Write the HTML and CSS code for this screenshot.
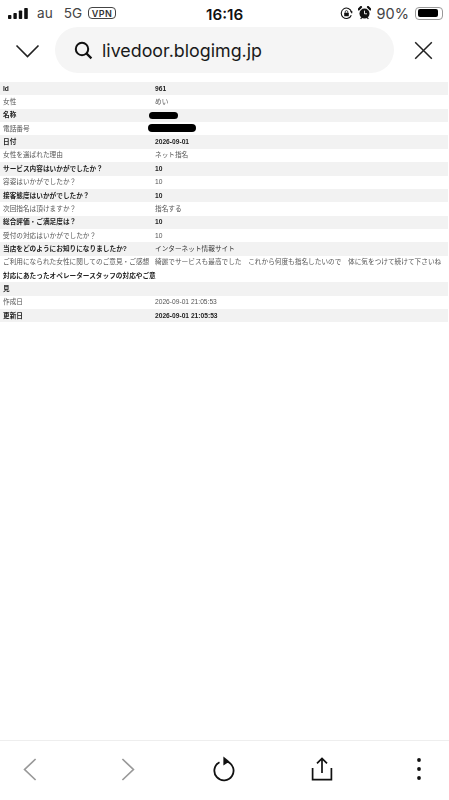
FILE: index.html
```
<!DOCTYPE html>
<html lang="ja">
<head>
<meta charset="utf-8">
<title>livedoor.blogimg.jp</title>
<link rel="stylesheet" href="styles.css">
</head>
<body>
<div class="phone">
  <div class="status">
    <div class="status-left">
      <svg class="signal" width="21" height="11" viewBox="0 0 21 11"><rect x="0" y="7" width="3.4" height="4" rx=".8"/><rect x="5.4" y="5" width="3.4" height="6" rx=".8"/><rect x="10.8" y="2.4" width="3.4" height="8.6" rx=".8"/><rect x="16.2" y="0" width="3.6" height="11" rx=".8"/></svg>
      <span class="carrier">au</span>
      <span class="net">5G</span>
      <span class="vpn">VPN</span>
    </div>
    <div class="clock">16:16</div>
    <div class="status-right">
      <svg class="lock" width="13" height="13" viewBox="0 0 13 13"><path d="M11.3 8.2A5.2 5.2 0 1 1 11.5 5" fill="none" stroke="#111" stroke-width="1.1"/><path d="M10 4.2l2.6.3-.6 2.2z" fill="#111"/><rect x="4.2" y="5.8" width="4.6" height="3.5" rx=".5" fill="#111"/><path d="M5.2 5.9V4.9a1.3 1.3 0 0 1 2.6 0v1" fill="none" stroke="#111" stroke-width=".8"/></svg>
      <svg class="alarm" width="13" height="14" viewBox="0 0 13 14"><circle cx="6.5" cy="7.6" r="5" fill="#111"/><path d="M.6 3.4 3 1M12.4 3.4 10 1" stroke="#111" stroke-width="2.2" stroke-linecap="round"/><path d="M6.5 4.6v3.2H9" fill="none" stroke="#fff" stroke-width=".9"/><path d="M2.6 12.8l1-1M10.4 12.8l-1-1" stroke="#111" stroke-width="1.2"/></svg>
      <span class="pct">90%</span>
      <span class="battery"><span class="battery-fill"></span></span>
    </div>
  </div>
  <header class="bar">
    <svg class="chev" width="25" height="14" viewBox="0 0 25 14"><path d="M1.5 1.5 12.5 12.5 23.5 1.5" fill="none" stroke="#222" stroke-width="1.6"/></svg>
    <div class="search">
      <svg class="glass" width="19" height="19" viewBox="0 0 19 19"><circle cx="8" cy="8" r="6.2" fill="none" stroke="#111" stroke-width="2"/><path d="M12.4 12.4 17.4 17.4" stroke="#111" stroke-width="2.2"/></svg>
      <span class="url">livedoor.blogimg.jp</span>
    </div>
    <svg class="close" width="19" height="19" viewBox="0 0 19 19"><path d="M1.2 1.2 17.8 17.8M17.8 1.2 1.2 17.8" stroke="#222" stroke-width="1.5"/></svg>
  </header>
  <main class="content">
    <table class="record">
      <tbody>
        <tr><th>Id</th><td>961</td></tr>
        <tr><th>女性</th><td>めい</td></tr>
        <tr><th>名称</th><td><span class="mask mask-name"></span></td></tr>
        <tr><th>電話番号</th><td><span class="mask mask-tel"></span></td></tr>
        <tr><th>日付</th><td>2026-09-01</td></tr>
        <tr><th>女性を選ばれた理由</th><td>ネット指名</td></tr>
        <tr><th>サービス内容はいかがでしたか？</th><td>10</td></tr>
        <tr><th>容姿はいかがでしたか？</th><td>10</td></tr>
        <tr><th>接客態度はいかがでしたか？</th><td>10</td></tr>
        <tr><th>次回指名は頂けますか？</th><td>指名する</td></tr>
        <tr><th>総合評価・ご満足度は？</th><td>10</td></tr>
        <tr><th>受付の対応はいかがでしたか？</th><td>10</td></tr>
        <tr><th>当店をどのようにお知りになりましたか?</th><td class="soft">インターネット情報サイト</td></tr>
        <tr><th>ご利用になられた女性に関してのご意見・ご感想</th><td>綺麗でサービスも最高でした　これから何度も指名したいので　体に気をつけて続けて下さいね</td></tr>
        <tr class="plain strong"><th>対応にあたったオペレータースタッフの対応やご意</th><td></td></tr>
        <tr class="tint strong"><th>見</th><td></td></tr>
        <tr class="plain"><th>作成日</th><td>2026-09-01 21:05:53</td></tr>
        <tr class="tint strong"><th>更新日</th><td>2026-09-01 21:05:53</td></tr>
      </tbody>
    </table>
  </main>
  <footer class="tools">
    <svg width="14" height="23" viewBox="0 0 14 23"><path d="M12.6 1 1.6 11.5 12.6 22" fill="none" stroke="#999" stroke-width="1.7"/></svg>
    <svg class="t-fwd" width="14" height="23" viewBox="0 0 14 23"><path d="M1.4 1 12.4 11.5 1.4 22" fill="none" stroke="#999" stroke-width="1.7"/></svg>
    <svg class="t-reload" width="24" height="26" viewBox="0 0 24 26"><path d="M7.5 6.2A9.6 9.6 0 1 0 15 5.6" fill="none" stroke="#111" stroke-width="1.8"/><path d="M11.4 0.6 17.6 5.4 11.4 9.6z" fill="#111"/></svg>
    <svg class="t-share" width="22" height="24" viewBox="0 0 22 24"><path d="M11 16V2M6 6.4 11 1.4 16 6.4" fill="none" stroke="#111" stroke-width="1.7"/><path d="M1.6 11v11.6h18.8V11" fill="none" stroke="#111" stroke-width="1.7"/></svg>
    <svg class="t-more" width="6" height="24" viewBox="0 0 6 24"><circle cx="3" cy="3" r="1.9" fill="#111"/><circle cx="3" cy="12" r="1.9" fill="#111"/><circle cx="3" cy="21" r="1.9" fill="#111"/></svg>
  </footer>
</div>
</body>
</html>
```

FILE: styles.css
```
* { box-sizing: border-box; }
html, body { margin: 0; padding: 0; background: #fff; }
body { font-family: Inter, "Liberation Sans", "Noto Sans CJK JP", sans-serif; color: #111; }
.phone { width: 449px; height: 800px; display: flex; flex-direction: column; overflow: hidden; }

.status { height: 27px; flex: none; display: flex; align-items: center; justify-content: space-between; padding: 0 6px 1px 8px; position: relative; }
.status-left { display: flex; align-items: center; }
.signal { fill: #111; margin-right: 8px; }
.carrier { font-size: 13.6px; color: #444; margin-right: 11px; }
.net { font-size: 13.6px; color: #444; margin-right: 6px; }
.vpn { font-size: 9px; font-weight: 600; letter-spacing: .5px; color: #333; border: 1.2px solid #444; border-radius: 4px; width: 28px; height: 12px; display: flex; align-items: center; justify-content: center; }
.clock { position: absolute; left: 206px; top: 5px; font-size: 15.2px; font-weight: 600; color: #111; }
.status-right { display: flex; align-items: center; }
.lock { margin-right: 5px; }
.alarm { margin-right: 6px; }
.pct { font-size: 14.5px; color: #444; margin-right: 6px; }
.battery { width: 28px; height: 13px; border: 1.2px solid #999; border-radius: 4px; padding: 1.5px; display: block; }
.battery-fill { display: block; width: 90%; height: 100%; background: #000; border-radius: 2px; }

.bar { height: 46px; flex: none; display: flex; align-items: center; padding: 0 17px 0 15px; }
.chev { flex: none; margin-right: 15px; margin-top: 1px; }
.search { width: 339px; height: 46px; flex: none; background: #f5f5f5; border-radius: 23px; display: flex; align-items: center; padding-left: 19px; }
.glass { flex: none; margin-right: 9px; }
.url { font-size: 17.85px; color: #1a1a1a; }
.close { flex: none; margin-left: 20px; }

.content { flex: 1; padding-top: 9px; min-height: 0; }
.record { width: 448px; border-collapse: collapse; table-layout: fixed; font-family: "Liberation Sans", "Noto Sans CJK JP", sans-serif; font-size: 6.67px; color: #555; filter: blur(.35px); }
.record tr { height: 13.36px; }
.record th, .record td { padding: 0 0 0 3px; text-align: left; font-weight: 400; white-space: nowrap; line-height: 8px; overflow: visible; }
.record th { width: 152px; }
.record tr:nth-child(odd) { background: #f2f2f2; }
.record tr:nth-child(odd) th, .record tr:nth-child(odd) td, .record tr.strong th, .record tr.strong td { font-weight: 700; color: #222; }
.record tr.plain { background: #fff; }
.record tr.tint { background: #f2f2f2; }
.record tr.plain:not(.strong) th, .record tr.plain:not(.strong) td { font-weight: 400; color: #555; }
.record tr td.soft { font-weight: 400; color: #333; }
.mask { display: block; background: #000; border-radius: 4px; }
.mask-name { width: 29px; height: 7px; margin-left: -6px; }
.mask-tel { width: 48px; height: 8px; margin: -1px 0 1px -7px; }

.tools { height: 60px; flex: none; border-top: 1px solid #eee; display: flex; align-items: center; padding: 0 0 3px 23px; }
.t-fwd { margin-left: 84px; }
.t-reload { margin-left: 77px; }
.t-share { margin-left: 75px; }
.t-more { margin-left: 83px; }
```
